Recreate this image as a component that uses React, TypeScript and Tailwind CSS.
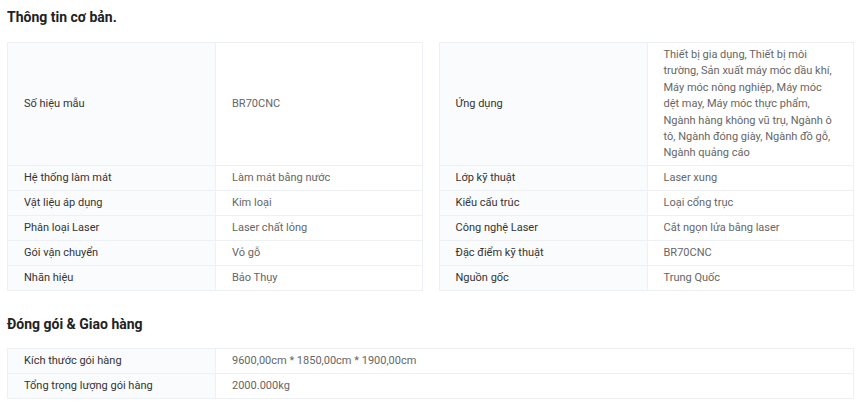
const basicLeft = [
  { label: "Số hiệu mẫu", value: "BR70CNC" },
  { label: "Hệ thống làm mát", value: "Làm mát bằng nước" },
  { label: "Vật liệu áp dụng", value: "Kim loại" },
  { label: "Phân loại Laser", value: "Laser chất lỏng" },
  { label: "Gói vận chuyển", value: "Vỏ gỗ" },
  { label: "Nhãn hiệu", value: "Bảo Thụy" },
];

const basicRight = [
  {
    label: "Ứng dụng",
    value:
      "Thiết bị gia dụng, Thiết bị môi trường, Sản xuất máy móc dầu khí, Máy móc nông nghiệp, Máy móc dệt may, Máy móc thực phẩm, Ngành hàng không vũ trụ, Ngành ô tô, Ngành đóng giày, Ngành đồ gỗ, Ngành quảng cáo",
  },
  { label: "Lớp kỹ thuật", value: "Laser xung" },
  { label: "Kiểu cấu trúc", value: "Loại cổng trục" },
  { label: "Công nghệ Laser", value: "Cắt ngọn lửa bằng laser" },
  { label: "Đặc điểm kỹ thuật", value: "BR70CNC" },
  { label: "Nguồn gốc", value: "Trung Quốc" },
];

const shipping = [
  { label: "Kích thước gói hàng", value: "9600,00cm * 1850,00cm * 1900,00cm" },
  { label: "Tổng trọng lượng gói hàng", value: "2000.000kg" },
];

type Row = { label: string; value: string };

function Pair({ row, first, labelWidth }: { row: Row; first: boolean; labelWidth: string }) {
  return (
    <div
      className={`flex border-x border-b border-[#edf0f4] ${first ? "border-t" : ""}`}
    >
      <div
        className={`${labelWidth} shrink-0 flex items-center min-h-[24px] bg-[#fafbfc] border-r border-[#edf0f4] pl-4 pr-3 pt-px text-[#333333]`}
      >
        {row.label}
      </div>
      <div className="flex-1 min-w-0 flex items-center min-h-[24px] px-4 pt-[4px] pb-[3px] leading-[16.4px] text-[#666666]">
        {row.value}
      </div>
    </div>
  );
}

export default function App() {
  return (
    <div className="w-[860px] h-[413px] bg-white px-[7px] pt-[7px] text-[11px] leading-4 font-['Roboto',sans-serif] overflow-hidden">
      <h2 className="text-[14px] leading-5 font-bold text-[#222222] mb-[15px]">Thông tin cơ bản.</h2>
      <div className="w-[847px]">
        {basicLeft.map((row, i) => (
          <div key={row.label} className="grid grid-cols-2 gap-4">
            <Pair row={row} first={i === 0} labelWidth="w-[208px]" />
            <Pair row={basicRight[i]} first={i === 0} labelWidth="w-[208px]" />
          </div>
        ))}
      </div>

      <h2 className="text-[14px] leading-5 font-bold text-[#222222] mt-[23px] mb-[14px]">Đóng gói &amp; Giao hàng</h2>
      <div className="w-[847px]">
        {shipping.map((row, i) => (
          <Pair key={row.label} row={row} first={i === 0} labelWidth="w-[208px]" />
        ))}
      </div>
    </div>
  );
}
